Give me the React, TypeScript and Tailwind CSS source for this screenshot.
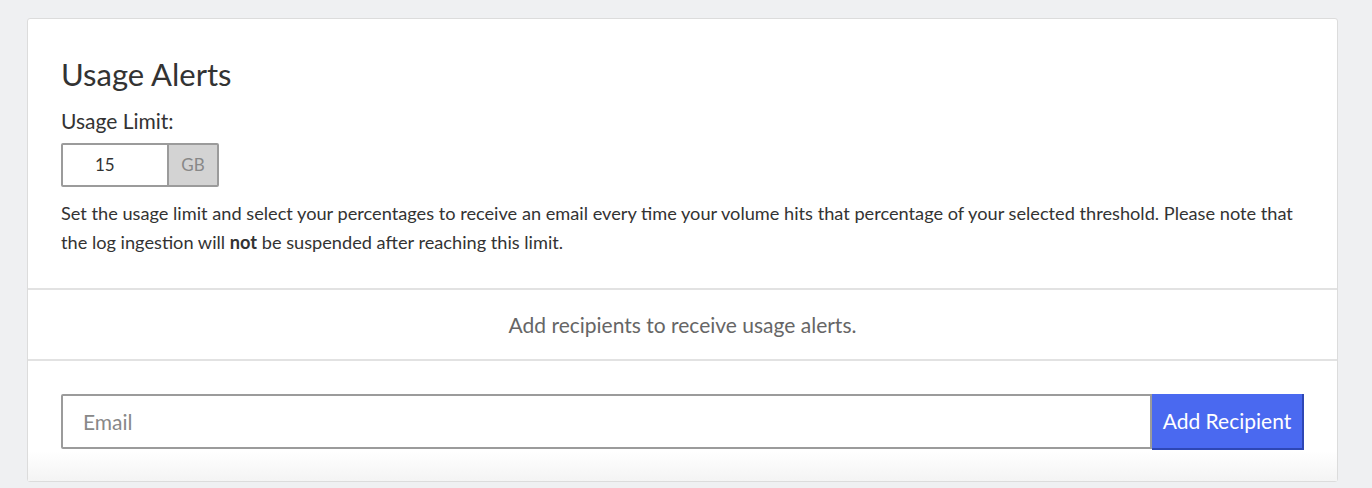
import { useState } from 'react';

export default function App() {
  const [limit, setLimit] = useState('15');
  const [email, setEmail] = useState('');

  return (
    <div className="min-h-[488px] w-full bg-[#eff0f2] pt-[18px] font-['Lato','Liberation_Sans',sans-serif]">
      <div className="ml-[27px] w-[1311px] rounded-[3px] border border-[#dcdcdc] bg-white">
        <section className="px-[33px] pt-[34px] pb-[31px]">
          <h1 className="text-[31px] leading-[42px] text-[#333]">Usage Alerts</h1>
          <label className="mt-[13px] block text-[21px] leading-[26px] text-[#333]">Usage Limit:</label>
          <div className="mt-[9px] flex h-[44px] w-[158px] overflow-hidden rounded-[2px] border-2 border-[#9b9b9b]">
            <input
              value={limit}
              onChange={e => setLimit(e.target.value)}
              className="w-[106px] border-r-2 border-[#9b9b9b] bg-white pl-[32px] text-[17px] text-[#333] outline-none"
            />
            <span className="flex flex-1 items-center justify-center bg-[#d3d3d3] text-[17px] text-[#888]">GB</span>
          </div>
          <p className="mt-[12px] text-[18.2px] leading-[29px] text-[#333]">
            Set the usage limit and select your percentages to receive an email every time your volume hits that percentage of your
            selected threshold. Please note that
            <br />
            the log ingestion will <b>not</b> be suspended after reaching this limit.
          </p>
        </section>
        <div className="flex h-[73px] items-center justify-center border-y-2 border-[#e2e2e2] text-[21px] text-[#666]">
          Add recipients to receive usage alerts.
        </div>
        <section className="flex bg-gradient-to-b from-white from-75% to-[#f4f4f4] px-[33px] pt-[33px] pb-[31px]">
          <input
            value={email}
            onChange={e => setEmail(e.target.value)}
            placeholder="Email"
            className="h-[55px] flex-1 rounded-l-[2px] border-2 border-[#9b9b9b] bg-white px-[20px] text-[21px] text-[#333] outline-none placeholder:text-[#888]"
          />
          <button className="h-[56px] w-[152px] border-r-2 border-b-2 border-[#2e47b5] bg-[#4a69f0] text-[21px] text-white">
            Add Recipient
          </button>
        </section>
      </div>
    </div>
  );
}
